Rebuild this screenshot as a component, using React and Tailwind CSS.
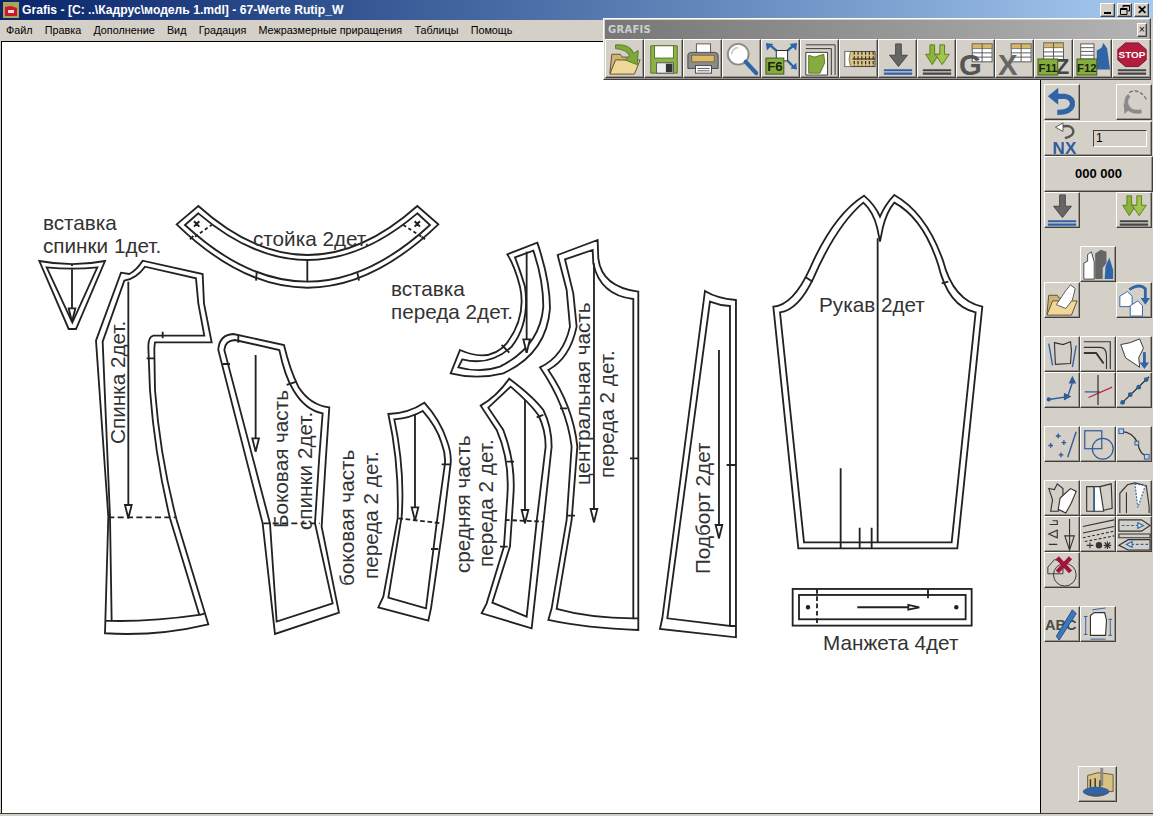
const raised = 'border border-t-white border-l-white border-r-[#404040] border-b-[#404040] shadow-[inset_-1px_-1px_0_#9a968e] bg-[#d4d0c8]';
const ui = { fontFamily: '"Liberation Sans", sans-serif' };

const Tbl = ({ x = 14, y = 2 }) => (
  <g transform={`translate(${x} ${y})`}>
    <rect width="21" height="19" fill="#fff" stroke="#555" />
    <rect width="21" height="5" fill="#d9b765" stroke="#777" />
    <path d="M10.500 0V19M0 9.500H21M0 14H21" stroke="#555" fill="none" />
  </g>
);
const Double = ({ c = '#444' }) => <path d="M3 30H33M3 33.500H33" stroke={c} strokeWidth="2.200" fill="none" />;
const Fkey = ({ t, x = 2, y = 18, w = 20, size = 13 }) => (
  <g>
    <rect x={x} y={y} width={w} height="17" fill="#86ab3e" stroke="#3d5a1a" />
    <text x={x + w / 2} y={y + 13.5} textAnchor="middle" fontSize={size} fontWeight="700" fill="#15260a" style={ui}>{t}</text>
  </g>
);
const DownGrey = ({ c }) => (
  <g>
    <path d="M15.500 2H21.500V14H28L18.500 26L9 14H15.500Z" fill="#666" stroke="#444" />
    <Double c={c} />
  </g>
);
const DownGreen = () => (
  <g>
    <path d="M10.500 3H15.500V13H20L13 24L6 13H10.500Z" fill="#8cb43a" stroke="#5d7a22" />
    <path d="M21 3H26V13H31L23.500 24L16 13H21Z" fill="#a1c44c" stroke="#5d7a22" />
    <Double />
  </g>
);
const Folder = () => (
  <g>
    <path d="M4 13H13L15 16H28V33H2Z" fill="#cfb477" stroke="#5f4f28" />
    <path d="M2 34L8 19H34L28 34Z" fill="#efd89a" stroke="#5f4f28" />
  </g>
);

const icons = {
  open: () => (
    <g>
      <Folder />
      <path d="M8 3Q24 2 27 12L32 9L31 24L18 19L23 15Q20 8 8 7Z" fill="#7ea83a" stroke="#587a24" />
    </g>
  ),
  save: () => (
    <g>
      <path d="M4 4H32V33H4Z" fill="#8db545" stroke="#566f28" />
      <rect x="8" y="4" width="20" height="13" fill="#fff" stroke="#566f28" />
      <rect x="10" y="22" width="18" height="11" fill="#eee" stroke="#555" />
      <rect x="20" y="23" width="7" height="9" fill="#333" />
    </g>
  ),
  print: () => (
    <g>
      <rect x="11" y="2" width="15" height="12" fill="#fff" stroke="#555" />
      <path d="M2 14Q2 11 7 11H30Q34 11 34 14V28H2Z" fill="#8a8d90" stroke="#444" />
      <rect x="6" y="14" width="24" height="7" fill="#dcb969" stroke="#7b6430" />
      <rect x="10" y="25" width="17" height="8" fill="#fff" stroke="#444" />
      <path d="M12 28H25M12 30.500H25" stroke="#555" />
    </g>
  ),
  search: () => (
    <g>
      <circle cx="14" cy="13" r="11" fill="#fff" stroke="#8b8b8b" strokeWidth="2" />
      <path d="M7 13A7 7 0 0 1 14 6" stroke="#ccc" strokeWidth="2" fill="none" />
      <path d="M22 21L33 33" stroke="#2e65a6" strokeWidth="4.500" strokeLinecap="round" />
    </g>
  ),
  f6: () => (
    <g>
      <rect x="13" y="9" width="12" height="11" fill="#fff" stroke="#222" />
      <path d="M13 9L6 3M25 9L32 3M25 20L32 27" stroke="#2e65a6" strokeWidth="2.500" />
      <path d="M2 1L10 2L3 9ZM35 1L27 2L34 9ZM35 29L28 28L34 22Z" fill="#2e65a6" />
      <Fkey t="F6" x={2} y={17} w={19} size={14} />
    </g>
  ),
  nest: () => (
    <g fill="none" stroke="#333" strokeWidth="1">
      <path d="M3 3H34V35" />
      <path d="M3 7H30V35" />
      <path d="M3 11H26V35H3Z" fill="#fff" />
      <path d="M6 14L12 16L22 13L23 22L18 33H6Z" fill="#86ab3e" stroke="#5d7a22" />
    </g>
  ),
  tape: () => (
    <g>
      <rect x="3" y="10" width="32" height="16" fill="#dcc382" stroke="#444" />
      <path d="M3 10H9Q6 18 9 26H3Z" fill="#fff" stroke="#777" />
      <path d="M13 10V26M17 10V26M21 10V26M25 10V26M29 10V26M33 10V26" stroke="#333" strokeWidth="1.300" strokeDasharray="3.500 1.500" />
      <path d="M11 18H35" stroke="#333" strokeWidth="1.300" />
    </g>
  ),
  down: () => <DownGrey c="#2f5fa5" />,
  green: () => <DownGreen />,
  g: () => (
    <g>
      <Tbl />
      <text x="0" y="35" fontSize="31" fontWeight="700" fill="#555" style={ui}>G</text>
    </g>
  ),
  x: () => (
    <g>
      <Tbl />
      <text x="0" y="35" fontSize="31" fontWeight="700" fill="#666" style={ui}>X</text>
    </g>
  ),
  f11: () => (
    <g>
      <Tbl x={7} y={1} />
      <text x="20" y="34" fontSize="23" fontWeight="700" fill="#444" style={ui}>Z</text>
      <Fkey t="F11" x={1} y={18} w={21} size={12} />
    </g>
  ),
  f12: () => (
    <g>
      <rect x="5" y="2" width="14" height="16" fill="#fff" stroke="#555" />
      <path d="M5 6H19M5 10H19M5 14H19" stroke="#555" />
      <path d="M22 9L27 6L29 1L33 7L36 29H22Z" fill="#2f64a6" />
      <Fkey t="F12" x={1} y={18} w={21} size={12} />
    </g>
  ),
  stop: () => (
    <g>
      <path d="M11 1H25L33 8V19L25 26H11L3 19V8Z" fill="#b21d3d" stroke="#7f1029" />
      <text x="18" y="17" textAnchor="middle" fontSize="10.500" fontWeight="700" fill="#fff" style={ui}>STOP</text>
      <Double />
    </g>
  ),
  undo: () => (
    <g fill="none">
      <path d="M10 12H21Q30 14 29 21Q27 29 13 29" stroke="#2f64a6" strokeWidth="5.500" />
      <path d="M14 3V21L3 12Z" fill="#2f64a6" />
    </g>
  ),
  redo: () => (
    <g fill="none">
      <path d="M13 8Q21 3 29 12L32 17" stroke="#666" strokeWidth="1.200" strokeDasharray="4 2" />
      <path d="M26 28Q12 30 10 20Q9 14 13 11" stroke="#8a8a8a" strokeWidth="4" />
      <path d="M7 19L14 25L8 31Z" fill="#8a8a8a" />
    </g>
  ),
  nx: () => (
    <g>
      <path d="M16 5Q28 2 29 10Q29 15 20 17" fill="none" stroke="#555" strokeWidth="2.500" />
      <path d="M18 1V10L10 5.500Z" fill="#fff" stroke="#555" />
      <text x="7" y="34" fontSize="18" fontWeight="700" fill="#2f5c9a" style={ui}>NX</text>
    </g>
  ),
  garments: () => (
    <g>
      <path d="M3 34V17L7 15V8L11 5L14 16V34Z" fill="#fff" stroke="#444" />
      <path d="M15 34V7L21 3L27 5V17L23 22V34Z" fill="#666" />
      <path d="M25 34L26 20L30 11L34 24V34Z" fill="#2f64a6" />
    </g>
  ),
  folderPiece: () => (
    <g>
      <Folder />
      <path d="M12 23L22 8L27 2L32 6L29 18L22 27Z" fill="#fff" stroke="#555" />
    </g>
  ),
  swap: () => (
    <g>
      <path d="M3 14L11 9L16 14V25H3Z" fill="#fff" stroke="#2f64a6" />
      <path d="M14 24L22 19L27 24V35H14Z" fill="#fff" stroke="#2f64a6" />
      <path d="M13 7Q24 0 30 6V18" fill="none" stroke="#2f64a6" strokeWidth="3" />
      <path d="M25 16H35L30 23Z" fill="#2f64a6" />
    </g>
  ),
  sideLines: () => (
    <g fill="none" stroke="#333" strokeWidth="1.200">
      <path d="M10 6L19 8L27 5L28 14L27 28L11 29Z" />
      <path d="M4 7L8 30M33 9L29 32" stroke="#2f64a6" strokeWidth="1.500" />
    </g>
  ),
  corners: () => (
    <g fill="none" stroke="#333" strokeWidth="1.200">
      <path d="M3 5H31V34" />
      <path d="M3 11H20Q27 11 27 20V34" />
      <path d="M3 17H16L24 28" strokeWidth="2" />
    </g>
  ),
  pieceArrow: () => (
    <g>
      <path d="M4 8L14 6L24 2L28 12L23 22L24 32L9 22Z" fill="#fff" stroke="#333" />
      <path d="M29 16V28" stroke="#2f64a6" strokeWidth="3" />
      <path d="M24 27H34L29 34Z" fill="#2f64a6" />
    </g>
  ),
  poly: () => (
    <g>
      <path d="M4 28L24 25L29 10" fill="none" stroke="#2f5c9a" strokeWidth="1.500" />
      <path d="M20 21L28 25L20 29ZM25 11L29 3L33 11Z" fill="#2f5c9a" />
      <circle cx="4" cy="28" r="2.200" fill="#2f5c9a" />
    </g>
  ),
  cross: () => (
    <g fill="none" strokeWidth="1.300">
      <path d="M4 20H20" stroke="#2f5c9a" />
      <path d="M8 26L33 15" stroke="#c21f48" />
      <path d="M18 2V34" stroke="#333" />
    </g>
  ),
  dotted: () => (
    <g>
      <path d="M4 33L34 4" stroke="#222" strokeWidth="1.200" />
      {[[6, 31], [14, 23], [23, 15], [31, 7]].map(([x, y]) => <circle key={x} cx={x} cy={y} r="2.500" fill="#2f5c9a" />)}
    </g>
  ),
  points: () => (
    <g>
      <path d="M24 32L33 5" stroke="#2f5c9a" strokeWidth="1.500" />
      <path d="M14 7V12M11.500 9.500H16.500M6 17V22M3.500 19.500H8.500M20 14V19M17.500 16.500H22.500M17 27V32M14.500 29.500H19.500" stroke="#2f5c9a" strokeWidth="1.500" />
    </g>
  ),
  shapes: () => (
    <g fill="none" stroke="#2f5c9a" strokeWidth="1.300">
      <rect x="4" y="4" width="18" height="19" />
      <circle cx="23" cy="23" r="11" />
    </g>
  ),
  curve: () => (
    <g>
      <path d="M5 5Q16 5 22 17Q24 29 32 31" fill="none" stroke="#333" strokeWidth="1.300" />
      <rect x="2" y="2" width="5" height="5" fill="#bcd0e6" stroke="#2f5c9a" />
      <rect x="19" y="15" width="4" height="4" fill="#bcd0e6" stroke="#2f5c9a" />
      <rect x="29" y="29" width="5" height="5" fill="#bcd0e6" stroke="#2f5c9a" />
    </g>
  ),
  copyPiece: () => (
    <g stroke="#333" strokeWidth="1.200">
      <path d="M4 8L10 9L13 3L19 8V15L14 32H6L8 20Z" fill="none" />
      <path d="M16 18L27 8L33 11L28 23L22 34L14 30Z" fill="#fff" />
    </g>
  ),
  panels: () => (
    <g stroke="#333" strokeWidth="1.200">
      <path d="M20 6L32 3L33 29L24 31" fill="none" />
      <path d="M6 6H14V32H6Z" fill="none" />
      <path d="M14 6H20L24 32H14Z" fill="#fff" />
      <path d="M14 6V32" stroke="#2f64a6" strokeWidth="1.500" />
    </g>
  ),
  jacket: () => (
    <g stroke="#333" strokeWidth="1.200">
      <path d="M3 34V13L11 4L19 2L31 5L34 27V34" fill="none" />
      <path d="M10 12V34" fill="none" />
      <path d="M19 3L30 5L22 28Z" fill="#fff" strokeDasharray="2 1.500" stroke="#2f64a6" />
    </g>
  ),
  lay: () => (
    <g fill="none" stroke="#333" strokeWidth="1.200">
      <path d="M26 2V35M21 20H31L26 35Z" />
      <path d="M5 8H13V4H8M4 18L13 14V22ZM4 29H13" />
    </g>
  ),
  lines: () => (
    <g fill="none" stroke="#333" strokeWidth="1.200">
      <path d="M2 10L35 3M2 17L35 10" />
      <path d="M2 22L35 15M4 26L35 20" strokeDasharray="3 2" />
      <path d="M6 30H13M9.500 27V33" />
      <circle cx="19" cy="30" r="2.800" fill="#333" />
      <path d="M25 27L31 33M31 27L25 33M28 26V34M24 30H32" />
    </g>
  ),
  arrows: () => (
    <g fill="none" stroke="#333" strokeWidth="1.200">
      <path d="M2 3H26L35 9L26 15H2Z" />
      <path d="M2 18H35V22H2Z" />
      <path d="M2 30L12 24H35V35H12Z" />
      <path d="M5 9H22" stroke="#2f64a6" strokeDasharray="3 2" />
      <path d="M22 6L28 9L22 12Z" fill="#dce6f2" stroke="#2f64a6" />
      <path d="M15 29H33" stroke="#2f64a6" strokeDasharray="3 2" />
      <path d="M16 26L10 29L16 32Z" fill="#dce6f2" stroke="#2f64a6" />
    </g>
  ),
  remove: () => (
    <g>
      <path d="M3 15L10 7L19 9V22H3Z" fill="none" stroke="#333" />
      <circle cx="21" cy="23" r="12" fill="none" stroke="#333" />
      <path d="M13 5L27 20M27 5L13 20" stroke="#a01539" strokeWidth="4.500" />
    </g>
  ),
  abc: () => (
    <g>
      <text x="0" y="24" fontSize="15.500" fontWeight="700" fill="#4a4a4a" style={ui}>ABC</text>
      <path d="M29 3L33 7L15 35L12 31Z" fill="#3d77bd" stroke="#1f4a80" />
    </g>
  ),
  dims: () => (
    <g fill="none" stroke="#2f5c9a">
      <path d="M10 9L14 6L25 6L27 14L26 30H10Z" fill="#fff" stroke="#333" strokeWidth="1.200" />
      <path d="M12 3L26 1M5 10V29M3 10H7M3 29H7M31 13V30M29 13H33M29 30H33M10 34H26" />
    </g>
  ),
  pins: () => (
    <g>
      <path d="M7 9L18 6L34 8V26H7Z" fill="#d9c083" stroke="#6b5a30" />
      <path d="M22 1V20" stroke="#888" strokeWidth="3" />
      <path d="M10 13V24M15 12V24M20 14V24" stroke="#333" strokeWidth="1.500" />
      <ellipse cx="16" cy="26" rx="14" ry="5" fill="#2f64a6" />
      <path d="M2 27Q16 36 30 27Q16 32 2 27Z" fill="#555" />
    </g>
  ),
};

const Ic = ({ n }) => {
  const C = icons[n];
  return (
    <svg viewBox="0 0 36 36" className="w-[34px] h-[34px] overflow-visible">
      <C />
    </svg>
  );
};

const Btn = ({ n, className = 'w-[36px] h-[36px]' }) => (
  <div className={`${raised} ${className} flex items-center justify-center shrink-0`}>
    <Ic n={n} />
  </div>
);

const Row = ({ a, b, c, className = '' }) => (
  <div className={`grid grid-cols-[36px_36px_36px] ${className}`}>
    {a ? <Btn n={a} /> : <div />}
    {b ? <Btn n={b} /> : <div />}
    {c ? <Btn n={c} /> : <div />}
  </div>
);

const menu = ['Файл', 'Правка', 'Дополнение', 'Вид', 'Градация', 'Межразмерные приращения', 'Таблицы', 'Помощь'];
const tools = ['open', 'save', 'print', 'search', 'f6', 'nest', 'tape', 'down', 'green', 'g', 'x', 'f11', 'f12', 'stop'];

const labels = [
  ['вставка', 43, 230], ['спинки 1дет.', 43, 253], ['стойка 2дет.', 253, 246],
  ['вставка', 391, 296], ['переда 2дет.', 391, 319],
  ['Рукав 2дет', 819, 312], ['Манжета 4дет', 823, 650],
];
const vertical = [
  ['Спинка 2дет.', 125, 444], ['Боковая часть', 288, 528], ['спинки 2дет.', 312, 530],
  ['боковая часть', 354, 586], ['переда 2 дет.', 378, 579],
  ['средняя часть', 470, 573], ['переда 2 дет.', 493, 567],
  ['центральная часть', 590, 485], ['переда 2 дет.', 614, 478], ['Подборт 2дет', 710, 574],
];

const Arrow = ({ x, y1, y2, head = 40 }) => (
  <g>
    <path d={`M${x} ${y1}V${y2}`} />
    <path d={`M${x - 10} ${y2 - head}H${x + 10}L${x} ${y2}Z`} fill="#fff" />
  </g>
);

const Pattern = () => (
  <svg viewBox="2 42 1038 771" className="block w-[1038px] h-[771px]">
    <g transform="translate(20 190) scale(0.3333)" fill="none" stroke="#222" strokeWidth="5.500">
      {/* вставка спинки */}
      <path d="M58 213Q157 232 255 213L168 417H146Z" />
      <path d="M80 232Q157 240 232 232L157 398Z" />
      <path d="M156 222V240" strokeDasharray="6 5" />
      <Arrow x={156} y1={240} y2={395} />
      {/* спинка */}
      <path d="M228 452L303 248L328 252Q350 240 368 212L548 252L552 340L575 457L405 457Q403 470 403 480L405 600Q420 800 470 990L565 1303Q410 1340 255 1330L265 980Z" />
      <path d="M248 455L313 272Q350 265 375 230L528 265L535 340L553 437L400 437Q385 440 385 470L390 600Q405 800 450 985L538 1275Q400 1295 275 1293L270 980Z" />
      <path d="M255 1293H275M428 425V445M380 505H405M540 1275L555 1270" />
      <Arrow x={325} y1={275} y2={985} />
      <path d="M265 982H465" strokeDasharray="18 10" />
      {/* боковая часть спинки */}
      <path d="M595 480Q597 435 640 432L792 465Q810 540 835 590Q870 645 928 652L918 800L905 1010L957 1268L765 1332L728 1000Z" />
      <path d="M613 480Q615 452 645 450L778 480Q795 560 820 600Q855 660 908 670L898 800L885 1000L938 1240L770 1295L750 1000Z" />
      <Arrow x={707} y1={495} y2={785} />
      <path d="M730 1000H900" strokeDasharray="18 10" />
      <path d="M655 435V458M608 522H630M800 585L830 575" />
    </g>

    <g transform="translate(170 200) scale(0.3333)" fill="none" stroke="#222" strokeWidth="5.500">
      {/* стойка */}
      <path d="M20 73L85 18Q412 312 742 18L805 73Q412 453 20 73Z" />
      <path d="M45 75L85 40Q412 320 742 40L780 75Q412 415 45 75Z" />
      <path d="M412 180V245M260 218L258 242M562 218L567 242M60 118L70 108M755 110L765 118" />
      <path d="M75 110L125 75M700 75L755 110" strokeDasharray="10 8" />
      <path d="M72 64L88 80M88 64L72 80M734 64L750 80M750 64L734 80" strokeWidth="6" />
    </g>

    <g transform="translate(330 230) scale(0.3333)" fill="none" stroke="#222" strokeWidth="5.500">
      {/* вставка переда */}
      <path d="M532 73L622 38Q660 150 660 235Q650 370 520 430Q440 450 362 430L390 360Q480 400 530 340Q590 260 570 170Q555 110 532 73Z" />
      <path d="M555 82L610 62Q640 150 640 230Q630 350 510 410Q450 430 385 412L397 388Q480 410 545 350Q600 280 585 170Q570 120 555 82Z" />
      <Arrow x={590} y1={65} y2={368} />
      <path d="M515 345L538 368" />
      {/* центральная часть */}
      <path d="M683 75L803 30L805 85Q815 170 925 185V1200Q770 1195 655 1170L665 1135L710 870L725 650Q710 530 630 412Q700 380 720 290L710 180Z" />
      <path d="M705 88L788 60L790 100Q810 195 910 207V1165Q780 1165 680 1137L725 870L742 650Q730 530 655 420Q720 385 740 290L730 190Z" />
      <Arrow x={792} y1={100} y2={877} />
      <path d="M900 685H925M910 1165H925M690 535H712M710 857H735" />
      {/* средняя часть */}
      <path d="M452 527Q500 500 538 446Q610 500 640 540Q665 590 665 650L640 880L605 1195L455 1150L470 1120L522 950L532 800Q540 690 500 600Z" />
      <path d="M475 533L542 470Q600 520 625 555Q647 600 647 650L620 875L590 1160L487 1118L540 950L550 800Q558 700 520 600Z" />
      <Arrow x={585} y1={510} y2={880} />
      <path d="M525 870L640 875" strokeDasharray="14 8" />
      <path d="M530 695H552M620 562L640 555M510 950H533" />
      {/* боковая часть переда */}
      <path d="M175 552Q235 550 283 518Q330 570 350 630Q365 670 362 700L340 880L303 1135L295 1172L145 1132L160 1100L203 865Q208 700 175 552Z" />
      <path d="M193 568Q240 565 278 543Q320 590 335 640Q347 670 345 700L320 880L288 1135L175 1103L215 860Q225 720 193 568Z" />
      <Arrow x={255} y1={555} y2={872} />
      <path d="M205 865L335 880" strokeDasharray="14 8" />
      <path d="M335 703H362M303 957H325" />
      {/* подборт */}
      <path d="M1125 183Q1160 205 1218 210V1222L990 1197L997 1165Z" />
      <path d="M1140 215Q1170 227 1200 228V1188L1012 1165Z" />
      <path d="M1190 705H1218M1200 1188H1218" />
      <Arrow x={1167} y1={360} y2={925} />
    </g>

    <g transform="translate(760 185) scale(0.3333)" fill="none" stroke="#222" strokeWidth="5.500">
      {/* рукав */}
      <path d="M40 365Q100 360 150 250Q220 90 312 32Q345 60 360 95Q375 60 403 30Q500 85 550 230Q580 345 667 365L592 1090H115Z" />
      <path d="M60 382Q115 375 160 280Q230 120 310 53Q340 80 352 130L360 170L368 130Q380 80 403 53Q490 100 535 240Q565 365 647 382L575 1072H132Z" />
      <path d="M353 160V1072M242 850V1090M299 1028V1090M335 1028V1090M135 275L158 290M545 295L565 290" />
      {/* манжета */}
      <rect x="98" y="1212" width="537" height="110" />
      <rect x="117" y="1230" width="500" height="73" />
      <path d="M171 1212V1322" strokeDasharray="14 8" />
      <path d="M504 1212V1240M292 1267H445" />
      <path d="M445 1260V1274L478 1267Z" fill="#fff" />
      <circle cx="144" cy="1267" r="4" fill="#222" />
      <circle cx="589" cy="1267" r="4" fill="#222" />
    </g>

    <g fontSize="20.700" fill="#333" style={ui}>
      {labels.map(([t, x, y]) => <text key={t + x} x={x} y={y}>{t}</text>)}
      {vertical.map(([t, x, y]) => <text key={t + x} transform={`translate(${x} ${y}) rotate(-90)`}>{t}</text>)}
    </g>
  </svg>
);

const WinBtn = ({ children }) => (
  <div className={`${raised} relative w-[15px] h-[14px] flex items-center justify-center`}>{children}</div>
);

export default function App() {
  return (
    <div className="relative w-[1153px] h-[816px] flex flex-col bg-[#d4d0c8] overflow-hidden" style={ui}>
      {/* barra de título */}
      <div className="h-[20px] flex items-center justify-between pl-[3px] pr-[4px] bg-gradient-to-r from-[#0a246a] to-[#a6caf0]">
        <div className="flex items-center gap-[3px]">
          <svg viewBox="0 0 16 16" className="w-[16px] h-[16px]">
            <rect width="16" height="16" fill="#a8a55a" />
            <path d="M2 5L8 4L14 6V14H2Z" fill="#c8182c" />
            <path d="M5 8H11V11H5Z" fill="#f2dcdc" />
          </svg>
          <span className="text-[12.150px] font-bold text-white leading-none whitespace-nowrap">Grafis - [C: ..\Кадрус\модель 1.mdl] - 67-Werte Rutip_W</span>
        </div>
        <div className="flex gap-[2px]">
          <WinBtn><div className="w-[7px] h-[2px] bg-black mt-[6px]" /></WinBtn>
          <WinBtn>
            <svg viewBox="0 0 10 10" className="w-[10px] h-[10px]" fill="none" stroke="#000">
              <path d="M3 2.500V0.500H9.500V6H7.500M3 1H9.500" />
              <path d="M0.500 3.500H7V9.500H0.500ZM0.500 4.500H7" />
            </svg>
          </WinBtn>
          <WinBtn><span className="text-[12px] font-bold leading-none text-black">✕</span></WinBtn>
        </div>
      </div>

      {/* menú */}
      <div className="h-[21px] flex items-center gap-[12.200px] pl-[6px] text-[10.800px] text-black">
        {menu.map((m) => <span key={m} className="whitespace-nowrap">{m}</span>)}
      </div>

      <div className="flex-1 flex min-h-0">
        <div className="w-[1039px] ml-[1px] bg-white border-t border-l border-black">
          <Pattern />
        </div>

        {/* paleta derecha */}
        <div className="w-[113px] border-l border-black pl-[3px] pt-[43px] flex flex-col items-start">
          <Row a="undo" c="redo" />
          <div className={`${raised} w-[108px] h-[35px] mt-[1px] flex items-center pl-[1px]`}>
            <Ic n="nx" />
            <div className="ml-[13px] w-[54px] h-[17px] bg-[#d4d0c8] border border-t-[#404040] border-l-[#404040] border-r-white border-b-white text-[12px] leading-[15px] pl-[2px]">1</div>
          </div>
          <div className={`${raised} w-[109px] h-[36px] flex items-center justify-center text-[13px] font-bold text-black`}>000 000</div>
          <Row a="down" c="green" />
          <Row b="garments" className="mt-[18px]" />
          <Row a="folderPiece" c="swap" />
          <Row a="sideLines" b="corners" c="pieceArrow" className="mt-[18px]" />
          <Row a="poly" b="cross" c="dotted" />
          <Row a="points" b="shapes" c="curve" className="mt-[18px]" />
          <Row a="copyPiece" b="panels" c="jacket" className="mt-[18px]" />
          <Row a="lay" b="lines" c="arrows" />
          <Row a="remove" />
          <Row a="abc" b="dims" className="mt-[18px]" />
          <Btn n="pins" className="w-[39px] h-[36px] ml-[34px] mt-[124px]" />
        </div>
      </div>
      <div className="h-[3px] border-t border-[#404040]" />

      {/* barra flotante */}
      <div className={`${raised} absolute left-[603px] top-[18px] w-[548px] h-[62px] flex flex-col p-[1px]`}>
        <div className="h-[19px] flex items-center justify-between pl-[3px] pr-[2px] bg-gradient-to-r from-[#777777] to-[#b4b4b4]">
          <span className="text-[10px] font-bold text-[#cfcfcf] tracking-wide" style={{ fontFamily: '"DejaVu Sans", sans-serif' }}>GRAFIS</span>
          <div className={`${raised} w-[10px] h-[14px] flex items-center justify-center text-[10px] leading-none text-black`}>×</div>
        </div>
        <div className="flex">
          {tools.map((t) => <Btn key={t} n={t} className="w-[39px] h-[39px]" />)}
        </div>
      </div>
    </div>
  );
}
